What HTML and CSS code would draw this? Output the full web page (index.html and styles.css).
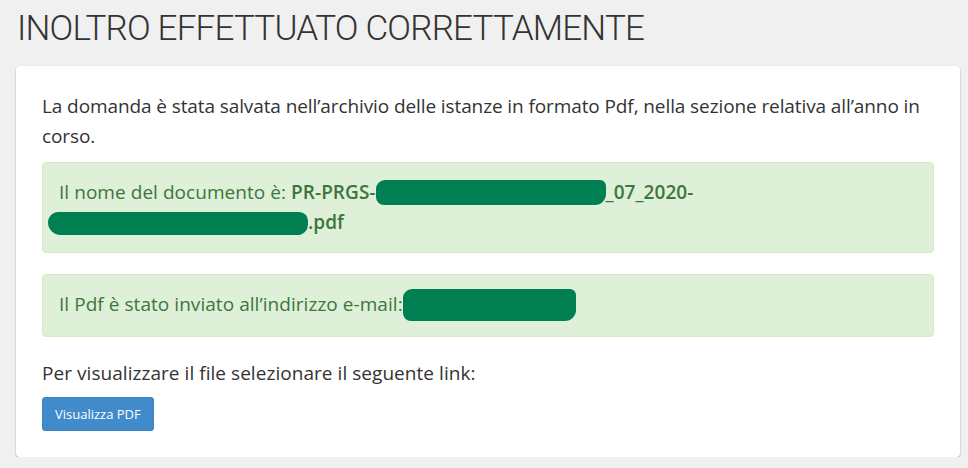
FILE: index.html
```html
<!DOCTYPE html>
<html lang="it">
<head>
    <meta charset="UTF-8">
    <meta name="viewport" content="width=device-width, initial-scale=1.0">
    <title>Inoltro effettuato</title>
    <link rel="stylesheet" href="styles.css">
</head>
<body>
    <h1 class="page-title">INOLTRO EFFETTUATO CORRETTAMENTE</h1>
    <div class="panel">
        <p class="intro">La domanda è stata salvata nell’archivio delle istanze in formato Pdf, nella sezione relativa all’anno in corso.</p>
        <div class="alert">
            Il nome del documento è: <strong>PR-PRGS-<span class="redact redact-a"></span>_07_2020-<br><span class="redact redact-b"></span>.pdf</strong>
        </div>
        <div class="alert">
            Il Pdf è stato inviato all’indirizzo e-mail:<span class="redact redact-c"></span>
        </div>
        <p class="hint">Per visualizzare il file selezionare il seguente link:</p>
        <button class="btn">Visualizza PDF</button>
    </div>
</body>
</html>
```

FILE: styles.css
```css
body {
    margin: 0;
    padding: 0 8px 0 16px;
    background-color: #f0f0f0;
    font-family: "Open Sans", Arial, sans-serif;
    color: #333;
}
.page-title {
    margin: 0 0 15px;
    padding: 7px 0 0 1px;
    font-family: Roboto, "Open Sans", sans-serif;
    font-size: 35px;
    font-weight: 300;
    line-height: 44px;
    letter-spacing: -0.8px;
    color: #333;
}
.panel {
    background-color: #fff;
    border-radius: 4px;
    box-shadow: 0 1px 2px rgba(0, 0, 0, 0.35);
    padding: 25px 26px 26px;
}
.intro {
    margin: 0 0 11px;
    font-size: 19px;
    line-height: 30px;
    letter-spacing: -0.1px;
}
.alert {
    margin-bottom: 21px;
    padding: 14px 16px 15px;
    background-color: #dff0d8;
    border: 1px solid #d6e9c6;
    border-radius: 4px;
    color: #3c763d;
    font-size: 19px;
    line-height: 30px;
    letter-spacing: 0.05px;
}
.alert strong {
    font-weight: 600;
}
.redact {
    display: inline-block;
    height: 25px;
    vertical-align: -6px;
    background-color: #007f53;
    border-radius: 9px 6px 11px 8px;
}
.redact-a {
    width: 230px;
}
.redact-b {
    width: 260px;
    height: 23px;
    margin-left: -11px;
    border-radius: 12px 10px 12px 14px;
}
.redact-c {
    width: 173px;
    height: 32px;
    vertical-align: -10px;
}
.hint {
    margin: 2px 0 9px;
    font-size: 19px;
    line-height: 30px;
    letter-spacing: 0.05px;
}
.btn {
    display: block;
    padding: 7px 12px;
    font-family: inherit;
    font-size: 13px;
    font-weight: 400;
    line-height: 18px;
    color: #fff;
    background-color: #428bca;
    border: 1px solid #3c80bd;
    border-radius: 3px;
    cursor: pointer;
}
```
